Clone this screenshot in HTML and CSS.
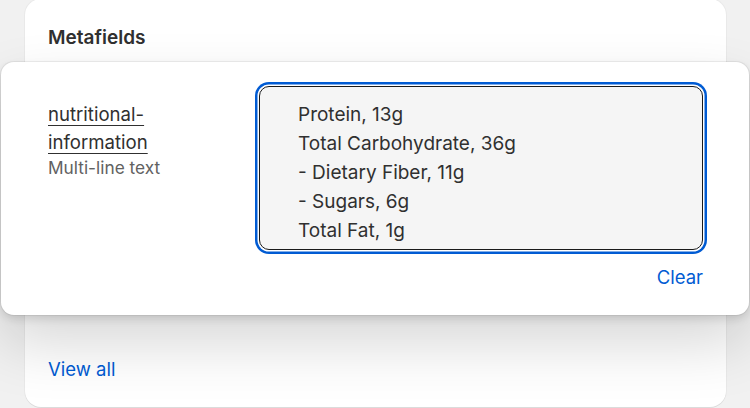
FILE: index.html
```html
<!DOCTYPE html>
<html lang="en">
<head>
<meta charset="utf-8">
<title>Metafields</title>
<link rel="stylesheet" href="styles.css">
</head>
<body>
<div class="page">
  <section class="card">
    <h2 class="card-title">Metafields</h2>
    <div class="card-spacer"></div>
    <a class="view-all" href="#">View all</a>
  </section>
  <div class="popover">
    <div class="field-row">
      <div class="field-label">
        <a class="field-name" href="#">nutritional-<br>information</a>
        <div class="field-type">Multi-line text</div>
      </div>
      <div class="field-input">
        <div class="textarea">
          <div class="line">Protein, 13g</div>
          <div class="line">Total Carbohydrate, 36g</div>
          <div class="line">- Dietary Fiber, 11g</div>
          <div class="line">- Sugars, 6g</div>
          <div class="line">Total Fat, 1g</div>
        </div>
        <div class="actions"><a class="clear" href="#">Clear</a></div>
      </div>
    </div>
  </div>
</div>
</body>
</html>
```
FILE: styles.css
```css
* { box-sizing: border-box; }
html, body {
  margin: 0;
  padding: 0;
  width: 750px;
  height: 408px;
  overflow: hidden;
  background: #f1f1f1;
  font-family: Inter, "Noto Sans", sans-serif;
  color: #303030;
}
.page {
  position: relative;
  width: 750px;
  height: 408px;
}
.card {
  margin: -1px 0 0 25px;
  width: 701px;
  height: 408px;
  background: #fff;
  border-radius: 16px;
  padding: 26px 23px 0;
  display: flex;
  flex-direction: column;
  box-shadow: 0 1px 0 rgba(0,0,0,0.06), 0 0 0 1px rgba(0,0,0,0.03);
}
.card-title {
  margin: 0;
  font-size: 19px;
  font-weight: 600;
  line-height: 26px;
  color: #303030;
}
.card-spacer { height: 305px; }
.view-all {
  color: #005bd3;
  text-decoration: none;
  font-size: 18.5px;
  line-height: 26px;
}
.popover {
  position: absolute;
  left: 1px;
  top: 63px;
  width: 748px;
  height: 253px;
  background: #fff;
  border-radius: 13px;
  box-shadow: 0 0 0 1px rgba(0,0,0,0.06), 0 4px 8px rgba(0,0,0,0.12), 0 28px 60px rgba(0,0,0,0.16);
  padding: 24px 46px 0 47px;
}
.field-row {
  display: flex;
}
.field-label {
  width: 211px;
  padding-top: 14px;
}
.field-name {
  display: inline-block;
  color: #303030;
  font-size: 18.6px;
  line-height: 28px;
  text-decoration: underline;
  text-underline-offset: 4px;
  text-decoration-thickness: 1px;
}
.field-type {
  color: #616161;
  font-size: 17.3px;
  line-height: 24px;
  margin-top: 0;
}
.field-input {
  flex: 1;
  display: flex;
  flex-direction: column;
}
.textarea {
  height: 164px;
  border: 1px solid #1a1a1a;
  border-radius: 10px;
  background: #f5f5f5;
  box-shadow: 0 0 0 1.5px #fff, 0 0 0 4px #005bd3;
  padding: 13px 12px 0 38px;
  font-size: 19px;
  line-height: 29px;
  color: #303030;
}
.actions {
  display: flex;
  justify-content: flex-end;
  padding-top: 14px;
}
.clear {
  color: #005bd3;
  text-decoration: none;
  font-size: 18.5px;
  line-height: 26px;
}
```
